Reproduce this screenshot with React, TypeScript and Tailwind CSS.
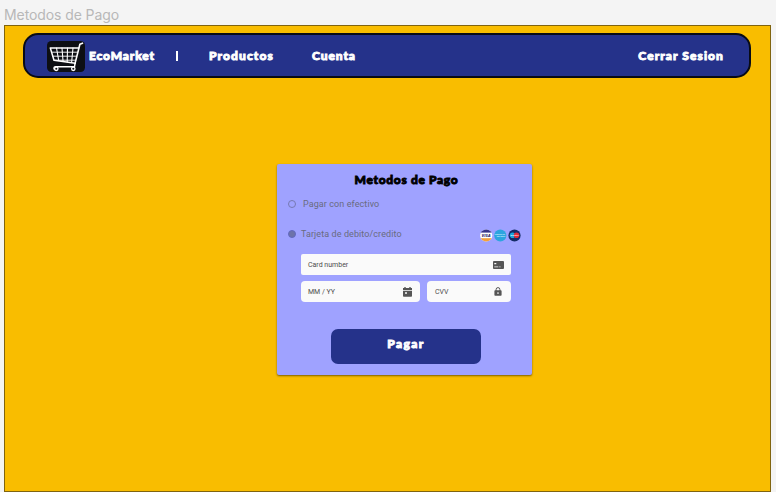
import type { ReactNode } from "react";

const display =
  "font-['Lato','Open_Sans',sans-serif] font-black whitespace-nowrap [-webkit-text-stroke:0.9px_currentColor]";

function CartLogo() {
  return (
    <svg className="mt-px h-[31px] w-[38px] shrink-0" viewBox="0 0 38 31" fill="none">
      <rect width="38" height="31" rx="4.5" fill="#0d0f13" />
      <g stroke="#fff" strokeLinecap="round" strokeLinejoin="round">
        <path d="M35.5 2.2 32.9 3.2 28 22.6" strokeWidth="1.6" />
        <path d="M3.3 7H31.6M3.3 7 7 19.2 28.2 22.2" strokeWidth="1.5" />
        <path d="M4.6 11.2H30.6M6 15.2H29.6M7 19.2H28.6" strokeWidth="0.9" />
        <path d="M9.5 7 11.7 19.5M15 7 16 20M20.5 7 20.2 21M26 7 24.6 21.5" strokeWidth="1.1" />
        <path d="M28 22.6 27.5 25.8H8.5C6.5 25.8 6.4 28.2 8 28.6" strokeWidth="1.4" />
        <circle cx="9.3" cy="27.8" r="1.7" strokeWidth="1.3" fill="#0d0f13" />
        <circle cx="26.3" cy="27.8" r="1.7" strokeWidth="1.3" fill="#0d0f13" />
      </g>
    </svg>
  );
}

function CardIcon() {
  return (
    <svg className="h-[8px] w-[11px]" viewBox="0 0 11 8">
      <rect width="11" height="8" rx="0.9" fill="#555" />
      <path d="M1.3 2h2v1.2h-2zM1.3 5.4h4v.9h-4zM6.3 5.4h1.2v.9H6.3z" fill="#fafafa" />
    </svg>
  );
}

function CalendarIcon() {
  return (
    <svg className="h-[10px] w-[9px]" viewBox="0 0 9 10">
      <path d="M1.3 0h1.4v1h3.6V0h1.4v1H9v2H0V1h1.3zM0 3.8h9V9a.8.8 0 0 1-.8.8H.8A.8.8 0 0 1 0 9z" fill="#555" />
      <path d="M2 5.2h2v1.6H2z" fill="#fafafa" />
    </svg>
  );
}

function LockIcon() {
  return (
    <svg className="h-[9px] w-[8px]" viewBox="0 0 8 9">
      <path d="M2.1 4V2.5a1.9 1.9 0 0 1 3.8 0V4" fill="none" stroke="#555" strokeWidth="1" />
      <rect x="0.4" y="3.3" width="7.2" height="5.5" rx="0.8" fill="#555" />
      <circle cx="4" cy="6" r="0.85" fill="#fafafa" />
    </svg>
  );
}

function Brands() {
  return (
    <svg className="block h-[13px] w-[41px]" viewBox="0 0 41 13">
      <clipPath id="visa"><circle cx="6.2" cy="6.5" r="6.1" /></clipPath>
      <g clipPath="url(#visa)">
        <rect width="13" height="13" fill="#fff" />
        <rect width="13" height="3.6" fill="#38358a" />
        <rect y="9.2" width="13" height="4" fill="#f3a03c" />
      </g>
      <text x="6.2" y="7.8" textAnchor="middle" fontSize="3.8" fontWeight="800" fontStyle="italic" fontFamily="Open Sans, sans-serif" fill="#29296d">VISA</text>
      <circle cx="20.3" cy="6.5" r="6.1" fill="#2da5df" />
      <text x="19.8" y="6.2" textAnchor="middle" fontSize="1.9" fontWeight="700" fontFamily="Roboto, sans-serif" fill="#d7f2ff">AMERICAN</text>
      <text x="21" y="8.4" textAnchor="middle" fontSize="1.9" fontWeight="700" fontFamily="Roboto, sans-serif" fill="#d7f2ff">EXPRESS</text>
      <circle cx="34.5" cy="6.5" r="6.1" fill="#142b67" />
      <circle cx="32.6" cy="6.3" r="2.8" fill="#17a5dc" />
      <circle cx="36.5" cy="6.3" r="2.8" fill="#df2938" />
      <text x="34.6" y="7" textAnchor="middle" fontSize="2" fontWeight="700" fontFamily="Roboto, sans-serif" fill="#fff">maestro</text>
    </svg>
  );
}

function Field({ label, size, children }: { label: string; size: string; children: ReactNode }) {
  return (
    <div className={`flex h-[21px] items-center justify-between bg-[#fafafa] text-[7px] text-[#4c4c4c] ${size}`}>
      <span className="pt-[2px]">{label}</span>
      {children}
    </div>
  );
}

export default function App() {
  return (
    <div className="h-[492px] w-[776px] overflow-hidden bg-[#f4f4f4] pl-[4px] font-['Roboto',sans-serif]">
      <div className="h-[25px] pt-[5px] font-['Inter',sans-serif] text-[14px] leading-[20px] tracking-[-0.09px] text-[#b8b8b8]">
        Metodos de Pago
      </div>
      <main className="flex h-[467px] w-[767px] flex-col border border-[#80640f] bg-[#f9bd00] pl-[18px] pt-[7px]">
        <header className="flex h-[45px] w-[728px] shrink-0 items-center rounded-[15px] border-2 border-[#080b16] bg-[#25328a] pl-[22px] text-[12px] leading-[16px] text-white">
          <CartLogo />
          <span className={`${display} ml-[4px] w-[87px] tracking-[0.85px]`}>EcoMarket</span>
          <span className="mt-px h-[10px] w-[2px] bg-white" />
          <span className={`${display} ml-[31px] w-[103px] tracking-[1.1px]`}>Productos</span>
          <span className={`${display} tracking-[0.9px]`}>Cuenta</span>
          <span className={`${display} ml-auto mr-[25px] tracking-[1.08px]`}>Cerrar Sesion</span>
        </header>
        <section className="ml-[254px] mt-[86px] flex h-[211px] w-[255px] shrink-0 flex-col rounded-[2px] bg-[#9fa2ff] shadow-[0_1px_2px_rgba(0,0,0,0.5)]">
          <h1 className={`${display} ml-[4px] mt-[8px] text-center text-[12px] leading-[16px] tracking-[0.67px] text-black`}>
            Metodos de Pago
          </h1>
          <div className="mt-[8px] flex h-[16px] items-center pl-[11px] text-[9px] tracking-[0.09px] text-[#696b80]">
            <span className="mr-[7px] size-[8px] rounded-full border border-[#7679b2]" />
            <span className="pt-[2px]">Pagar con efectivo</span>
          </div>
          <div className="mt-[14px] flex h-[16px] items-center pl-[11px] text-[9px] tracking-[0.09px] text-[#696b80]">
            <span className="mr-[5px] size-[8px] rounded-full border border-[#6269c0] bg-[#6d73aa]" />
            <span className="pt-[2px]">Tarjeta de debito/credito</span>
            <span className="ml-auto mr-[11px] mt-[3px]"><Brands /></span>
          </div>
          <div className="ml-[24px] mt-[12px] flex w-[210px] flex-col gap-[6px]">
            <Field label="Card number" size="w-full rounded-[2px] pl-[7px] pr-[7px]"><CardIcon /></Field>
            <div className="flex gap-[7px]">
              <Field label="MM / YY" size="w-[119px] rounded-[4px] pl-[7px] pr-[8px]"><CalendarIcon /></Field>
              <Field label="CVV" size="w-[84px] rounded-[4px] pl-[8px] pr-[9px]"><LockIcon /></Field>
            </div>
          </div>
          <button className={`${display} ml-[54px] mt-[27px] h-[35px] w-[150px] rounded-[7px] bg-[#25328a] pb-[6px] text-[12px] leading-[16px] tracking-[1.4px] text-white`}>
            Pagar
          </button>
        </section>
      </main>
    </div>
  );
}
